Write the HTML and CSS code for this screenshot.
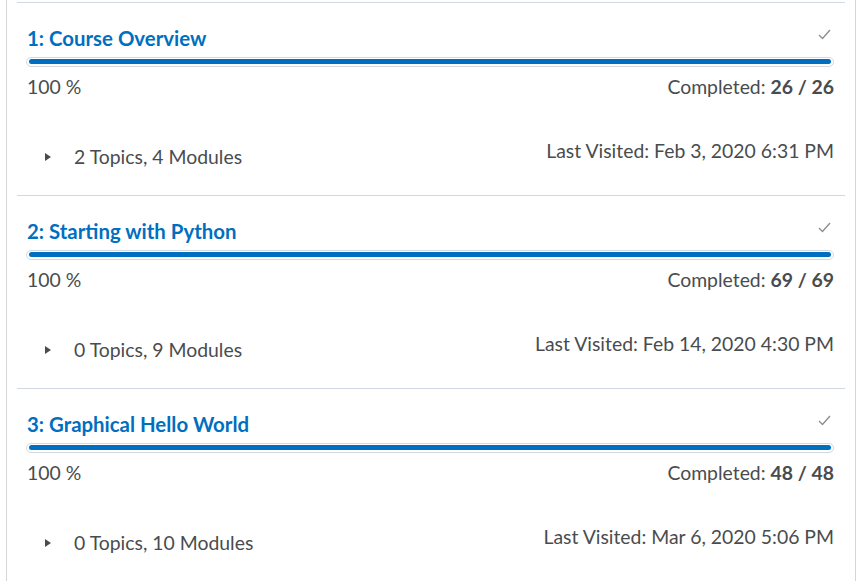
FILE: index.html
```html
<!DOCTYPE html>
<html>
<head>
<meta charset="utf-8">
<link rel="stylesheet" href="styles.css">
</head>
<body>
<div class="panel">
  <ul class="units">
    <li class="unit">
      <div class="unit-head">
        <a class="unit-title" href="#">1: Course Overview</a>
        <svg class="check" width="13" height="11" viewBox="0 0 13 11"><polyline points="1,6 4.5,9.5 12,1" fill="none" stroke="#8a8f94" stroke-width="1.4"/></svg>
      </div>
      <div class="bar"><div class="bar-fill" style="width:100%"></div></div>
      <div class="stats">
        <span>100 %</span>
        <span>Completed: <b>26 / 26</b></span>
      </div>
      <div class="meta">
        <div class="toggle"><span class="tri"></span><span>2 Topics, 4 Modules</span></div>
        <div class="visited">Last Visited: Feb 3, 2020 6:31 PM</div>
      </div>
    </li>
    <li class="unit">
      <div class="unit-head">
        <a class="unit-title" href="#">2: Starting with Python</a>
        <svg class="check" width="13" height="11" viewBox="0 0 13 11"><polyline points="1,6 4.5,9.5 12,1" fill="none" stroke="#8a8f94" stroke-width="1.4"/></svg>
      </div>
      <div class="bar"><div class="bar-fill" style="width:100%"></div></div>
      <div class="stats">
        <span>100 %</span>
        <span>Completed: <b>69 / 69</b></span>
      </div>
      <div class="meta">
        <div class="toggle"><span class="tri"></span><span>0 Topics, 9 Modules</span></div>
        <div class="visited">Last Visited: Feb 14, 2020 4:30 PM</div>
      </div>
    </li>
    <li class="unit">
      <div class="unit-head">
        <a class="unit-title" href="#">3: Graphical Hello World</a>
        <svg class="check" width="13" height="11" viewBox="0 0 13 11"><polyline points="1,6 4.5,9.5 12,1" fill="none" stroke="#8a8f94" stroke-width="1.4"/></svg>
      </div>
      <div class="bar"><div class="bar-fill" style="width:100%"></div></div>
      <div class="stats">
        <span>100 %</span>
        <span>Completed: <b>48 / 48</b></span>
      </div>
      <div class="meta">
        <div class="toggle"><span class="tri"></span><span>0 Topics, 10 Modules</span></div>
        <div class="visited">Last Visited: Mar 6, 2020 5:06 PM</div>
      </div>
    </li>
  </ul>
</div>
</body>
</html>
```

FILE: styles.css
```css
html, body {
  margin: 0;
  padding: 0;
  background: #fff;
}
body {
  font-family: Lato, "Open Sans", sans-serif;
  color: #494c4e;
  overflow: hidden;
  height: 581px;
}
.panel {
  margin-left: 6px;
  width: 848px;
  min-height: 581px;
  border-left: 1px solid #d3d6d9;
  border-right: 1px solid #d3d6d9;
  padding-top: 2px;
  box-sizing: content-box;
}
.units {
  list-style: none;
  margin: 0;
  padding: 0 10px;
}
.unit {
  border-top: 1px solid #d3d9e3;
  padding: 23px 11px 26px 10px;
}
.unit-head {
  display: flex;
  justify-content: space-between;
  align-items: flex-start;
  height: 24px;
}
.unit-title {
  color: #006fbf;
  text-decoration: none;
  font-weight: 700;
  font-size: 20.4px;
  line-height: 24px;
}
.check {
  margin-top: 3px;
  margin-right: 3px;
}
.bar {
  margin-top: 7px;
  height: 10px;
  box-sizing: border-box;
  border: 1px solid #d3d9e3;
  border-radius: 5px;
  padding: 1px 2px 2px 2px;
  margin-left: -1px;
}
.bar-fill {
  height: 5px;
  background: #006fbf;
  border-radius: 3px;
}
.stats {
  margin-top: 8px;
  display: flex;
  justify-content: space-between;
  font-size: 19.4px;
  line-height: 24px;
}
.stats b {
  font-weight: 700;
}
.meta {
  margin-top: 40px;
  display: flex;
  justify-content: space-between;
  align-items: flex-start;
  font-size: 19.4px;
  line-height: 24px;
}
.toggle {
  margin-top: 6px;
  display: flex;
  align-items: center;
}
.tri {
  width: 0;
  height: 0;
  border-top: 4px solid transparent;
  border-bottom: 4px solid transparent;
  border-left: 6px solid #494c4e;
  margin-left: 18px;
  margin-right: 23px;
}
```
